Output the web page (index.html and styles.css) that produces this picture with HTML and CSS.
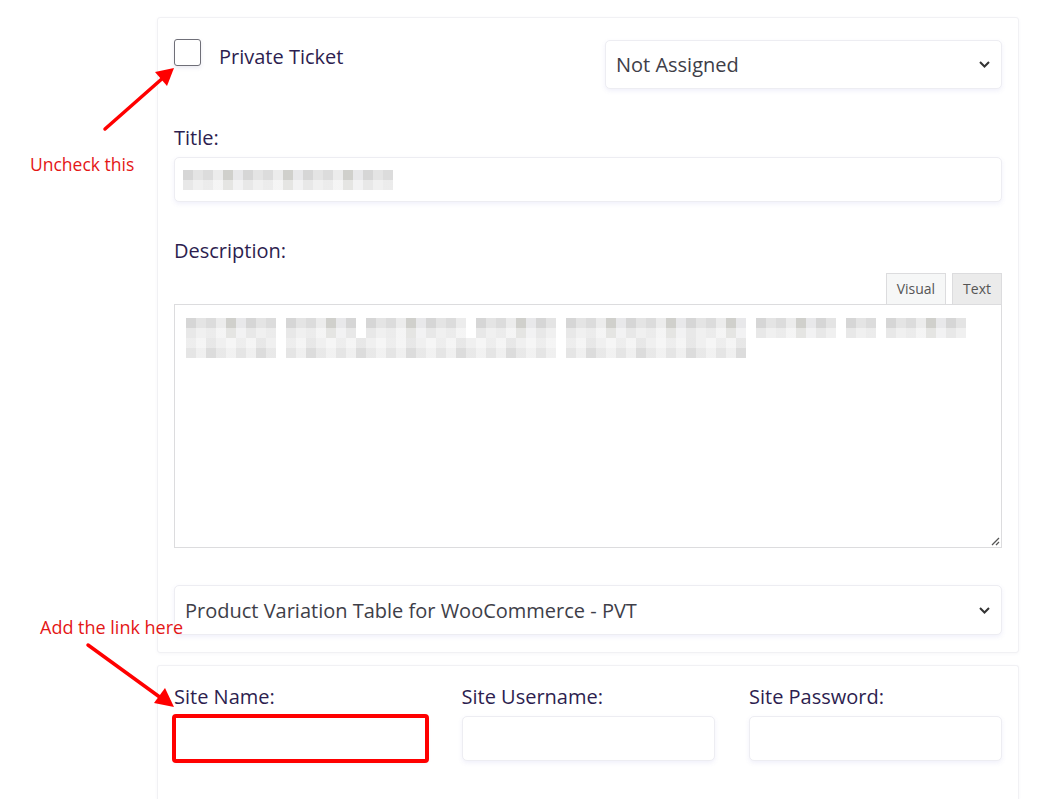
FILE: index.html
```html
<!DOCTYPE html>
<html>
<head>
<meta charset="utf-8">
<link rel="stylesheet" href="styles.css">
</head>
<body>
<div class="page">
  <div class="panel panel-main">
    <div class="top-row">
      <label class="check">
        <span class="box"></span>
        <span class="check-text">Private Ticket</span>
      </label>
      <div class="select assign">
        <span>Not Assigned</span>
        <svg class="chev" width="11" height="7" viewBox="0 0 11 7"><path d="M1 1l4.5 4.5L10 1" fill="none" stroke="#333" stroke-width="2"/></svg>
      </div>
    </div>

    <div class="field">
      <div class="label">Title:</div>
      <div class="input title-input">
        <div class="blur-line">
          <span class="pix" style="width:210px"></span>
        </div>
      </div>
    </div>

    <div class="field">
      <div class="label">Description:</div>
      <div class="editor-tabs">
        <span class="tab tab-active">Visual</span>
        <span class="tab">Text</span>
      </div>
      <div class="editor">
        <div class="blur-line">
          <span class="pix" style="width:90px"></span>
          <span class="pix" style="width:70px"></span>
          <span class="pix" style="width:100px"></span>
          <span class="pix" style="width:80px"></span>
          <span class="pix" style="width:180px"></span>
          <span class="pix" style="width:80px"></span>
          <span class="pix" style="width:30px"></span>
          <span class="pix" style="width:80px"></span>
        </div>
        <div class="blur-line">
          <span class="pix alt" style="width:90px"></span>
          <span class="pix alt" style="width:270px"></span>
          <span class="pix alt" style="width:180px"></span>
        </div>
        <svg class="resize" width="10" height="10" viewBox="0 0 10 10"><path d="M9 2L2 9M9 6L6 9" stroke="#555" stroke-width="1.3"/></svg>
      </div>
    </div>

    <div class="select product">
      <span>Product Variation Table for WooCommerce - PVT</span>
      <svg class="chev" width="11" height="7" viewBox="0 0 11 7"><path d="M1 1l4.5 4.5L10 1" fill="none" stroke="#333" stroke-width="2"/></svg>
    </div>
  </div>

  <div class="panel panel-site">
    <div class="site-grid">
      <div class="site-field">
        <div class="label">Site Name:</div>
        <div class="input highlight"></div>
      </div>
      <div class="site-field">
        <div class="label">Site Username:</div>
        <div class="input"></div>
      </div>
      <div class="site-field">
        <div class="label">Site Password:</div>
        <div class="input"></div>
      </div>
    </div>
  </div>
</div>

<div class="note note-1">Uncheck this</div>
<div class="note note-2">Add the link here</div>
<svg class="arrows" width="1045" height="799" viewBox="0 0 1045 799">
  <line x1="105" y1="129" x2="164" y2="77" stroke="#f00" stroke-width="3.5" stroke-linecap="round"/>
  <polygon points="174,68 167,86 155,72" fill="#f00"/>
  <line x1="88" y1="645" x2="161" y2="698" stroke="#f00" stroke-width="3.5" stroke-linecap="round"/>
  <polygon points="174,707 154,703 165,688" fill="#f00"/>
</svg>
</body>
</html>
```

FILE: styles.css
```css
* { box-sizing: border-box; }
html, body { margin: 0; padding: 0; background: #fff; }
body {
  font-family: "Open Sans", "Noto Sans", sans-serif;
  width: 1045px;
  height: 799px;
  overflow: hidden;
  position: relative;
}
.page {
  padding: 17px 0 0 157px;
  width: 1019px;
}
.panel {
  background: #fff;
  border: 1px solid #f1f1f4;
  border-radius: 3px;
  box-shadow: 0 1px 3px rgba(120, 120, 160, 0.06);
}
.panel-main {
  padding: 21px 16px 17px 16px;
}
.top-row {
  display: flex;
  justify-content: space-between;
  align-items: flex-start;
}
.check {
  display: flex;
  align-items: flex-start;
  gap: 18px;
}
.box {
  width: 27px;
  height: 27px;
  border: 1.5px solid #6f6f78;
  border-radius: 3px;
  background: #fff;
  box-shadow: 0 2px 4px rgba(80, 80, 140, 0.12);
}
.check-text {
  font-size: 20px;
  color: #2d1e4f;
  margin-top: 4px;
  line-height: 28px;
}
.select {
  display: flex;
  align-items: center;
  justify-content: space-between;
  background: #fff;
  border: 1px solid #ededf2;
  border-radius: 5px;
  box-shadow: 0 2px 5px rgba(90, 90, 200, 0.09);
  color: #3e3e48;
  font-size: 20px;
  padding: 0 11px 0 10px;
}
.assign {
  width: 397px;
  height: 49px;
  margin-top: 1px;
}
.product {
  height: 50px;
  margin-top: 37px;
}
.chev { flex: none; }
.field { margin-top: 35px; }
.label {
  font-size: 20px;
  line-height: 28px;
  color: #2d1e4f;
  margin-bottom: 5px;
}
.input {
  height: 45px;
  background: #fff;
  border: 1px solid #ededf2;
  border-radius: 5px;
  box-shadow: 0 2px 5px rgba(90, 90, 200, 0.09);
}
.title-input {
  padding: 12px 8px;
}
.blur-line {
  display: flex;
  gap: 10px;
  height: 20px;
}
.pix {
  display: block;
  height: 20px;
  background:
    linear-gradient(180deg, rgba(255,255,255,0) 0 50%, rgba(255,255,255,0.45) 50% 100%),
    repeating-linear-gradient(90deg, #d6d6d6 0 10px, #e4e4e4 10px 20px, #dcdcdc 20px 30px, #ececec 30px 40px, #d0d0cc 40px 50px, #e8e8ea 50px 60px);
}
.pix.alt {
  background:
    linear-gradient(180deg, rgba(255,255,255,0.4) 0 50%, rgba(255,255,255,0.1) 50% 100%),
    repeating-linear-gradient(90deg, #e2e2e2 0 10px, #eeeeee 10px 20px, #d8d8d8 20px 30px, #e6e6e6 30px 40px, #f0f0f0 40px 50px);
}
.editor-tabs {
  display: flex;
  justify-content: flex-end;
  gap: 6px;
  margin-top: 8px;
}
.tab {
  height: 32px;
  padding: 0 10px;
  font-size: 14px;
  line-height: 30px;
  color: #555;
  background: #ebebeb;
  border: 1px solid #dcdcde;
  border-bottom: none;
}
.tab-active {
  background: #f6f7f7;
}
.editor {
  position: relative;
  height: 244px;
  border: 1px solid #dcdcde;
  padding: 13px 11px;
  margin-top: -1px;
}
.resize {
  position: absolute;
  right: 1px;
  bottom: 1px;
}
.panel-site {
  margin-top: 12px;
  padding: 17px 16px 40px 16px;
  border-bottom: none;
}
.site-grid {
  display: grid;
  grid-template-columns: 253px 253px 253px;
  justify-content: space-between;
}
.highlight {
  outline: 4px solid #f00;
  outline-offset: -2px;
  border-radius: 2px;
}
.note {
  position: absolute;
  color: #e41616;
  font-size: 17.5px;
  line-height: 24px;
  font-family: "Open Sans", "Noto Sans", sans-serif;
}
.note-1 { left: 30px; top: 152px; }
.note-2 { left: 40px; top: 615px; font-size: 18px; }
.arrows {
  position: absolute;
  left: 0;
  top: 0;
  pointer-events: none;
}
```
